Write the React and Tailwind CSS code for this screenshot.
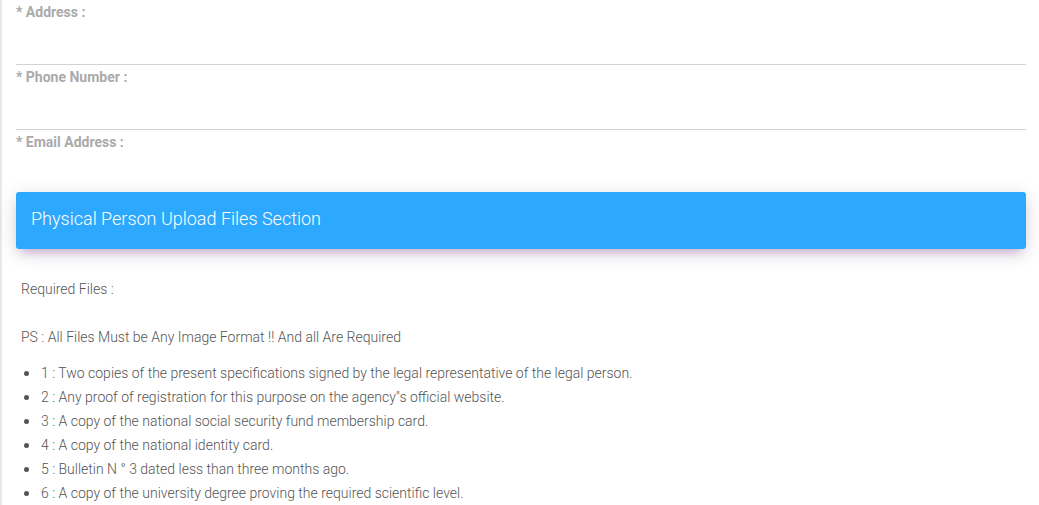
export default function App() {
  const items = [
    "1 : Two copies of the present specifications signed by the legal representative of the legal person.",
    "2 : Any proof of registration for this purpose on the agency''s official website.",
    "3 : A copy of the national social security fund membership card.",
    "4 : A copy of the national identity card.",
    "5 : Bulletin N ° 3 dated less than three months ago.",
    "6 : A copy of the university degree proving the required scientific level.",
  ];
  const fields = ["* Address :", "* Phone Number :", "* Email Address :"];
  return (
    <div
      className="w-[1039px] h-[505px] overflow-hidden bg-white flex"
      style={{ fontFamily: "Roboto, 'Noto Sans', sans-serif" }}
    >
      <div className="w-[2px] shrink-0 bg-[#e8e8e8]" />
      <div className="flex-1 pl-[14px] pr-[13px]">
        {fields.map((f, i) => (
          <div
            key={f}
            className={i < 2 ? "h-[65px] border-b border-[#d2d2d2]" : "h-[62px]"}
          >
            <div className="pt-[4px] text-[14px] leading-[16px] font-bold text-[#aaaaaa]">
              {f}
            </div>
          </div>
        ))}
        <div className="h-[57px] rounded-[3px] bg-[#2ca8ff] flex items-center pl-[15px] pb-[4px] shadow-[0_4px_20px_0_rgba(0,0,0,0.14),0_7px_10px_-5px_rgba(156,39,176,0.35)]">
          <span className="text-white text-[18px] font-light">
            Physical Person Upload Files Section
          </span>
        </div>
        <div className="pl-[5px] text-[14px] font-light">
          <p className="mt-[32px] leading-[16px] text-[#555]">Required Files :</p>
          <p className="mt-[32px] leading-[16px] text-[#555]">
            PS : All Files Must be Any Image Format !! And all Are Required
          </p>
          <ul className="mt-[16px] text-[#555]">
            {items.map((t) => (
              <li key={t} className="leading-[24px] flex items-center">
                <span className="w-[5px] h-[5px] rounded-full bg-[#555] ml-[3px] mr-[12px] mt-[1px] shrink-0" />
                <span>{t}</span>
              </li>
            ))}
          </ul>
        </div>
      </div>
    </div>
  );
}
